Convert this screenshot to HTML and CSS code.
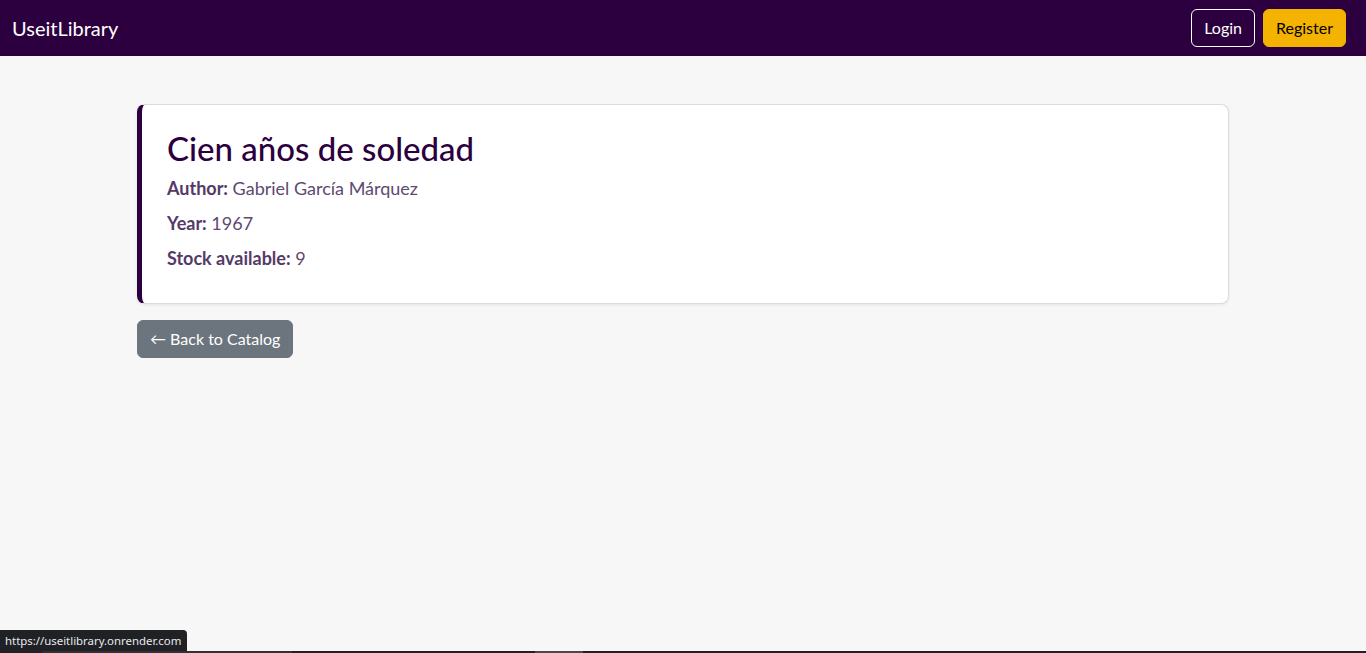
FILE: index.html
```html
<!DOCTYPE html>
<html lang="en">
<head>
<meta charset="utf-8">
<title>UseitLibrary</title>
<link rel="stylesheet" href="styles.css">
</head>
<body>
<nav class="navbar">
  <a class="brand" href="#">UseitLibrary</a>
  <div class="nav-actions">
    <a class="btn btn-outline" href="#">Login</a>
    <a class="btn btn-warning" href="#">Register</a>
  </div>
</nav>
<main class="container">
  <div class="book-card">
    <h2 class="book-title">Cien años de soledad</h2>
    <p class="book-line"><strong>Author:</strong> Gabriel García Márquez</p>
    <p class="book-line"><strong>Year:</strong> 1967</p>
    <p class="book-line"><strong>Stock available:</strong> 9</p>
  </div>
  <a class="btn btn-secondary" href="#">← Back to Catalog</a>
</main>
<div class="status-tip">https://useitlibrary.onrender.com</div>
<div class="screen-edge">
  <span class="seg seg-a"></span>
  <span class="seg seg-b"></span>
</div>
</body>
</html>
```

FILE: styles.css
```css
* { box-sizing: border-box; }
html, body { margin: 0; padding: 0; }
body {
  font-family: Lato, "Noto Sans", sans-serif;
  background: #f7f7f7;
  color: #212529;
  height: 653px;
  overflow: hidden;
}
.navbar {
  height: 56px;
  background: #2c003e;
  display: flex;
  align-items: center;
  justify-content: space-between;
  padding: 0 20px 0 12px;
}
.brand {
  color: #fff;
  text-decoration: none;
  font-size: 20px;
  line-height: 30px;
}
.nav-actions { display: flex; gap: 8px; }
.btn {
  display: inline-block;
  font-family: inherit;
  font-size: 16px;
  line-height: 24px;
  padding: 6px 12px;
  border: 1px solid transparent;
  border-radius: 6px;
  text-decoration: none;
}
.btn-outline { color: #fff; border-color: #fff; }
.btn-warning { background: #f5b301; border-color: #f5b301; color: #000; }
.btn-secondary { background: #6c757d; border-color: #6c757d; color: #fff; }
.container {
  width: 1092px;
  margin: 48px auto 0;
  padding: 0;
}
.book-card {
  background: #fff;
  border: 1px solid #dcdcdc;
  border-left: 5px solid #2c003e;
  border-radius: 8px;
  box-shadow: 0 1px 3px rgba(0,0,0,0.08);
  padding: 24px 24px 16px 25px;
  margin-bottom: 16px;
}
.book-title {
  margin: 0 0 8px;
  font-size: 33px;
  line-height: 38px;
  font-weight: 500;
  color: #2c003e;
}
.book-line {
  margin: 0 0 8px;
  font-size: 18px;
  line-height: 27px;
  color: #5e4a70;
}
.book-line:last-child { margin-bottom: 15px; }
.book-line strong { color: #553a68; font-weight: 700; }
.status-tip {
  position: fixed;
  left: 0;
  bottom: 2px;
  height: 21px;
  padding: 0 6px 0 5px;
  background: #202124;
  color: #e8eaed;
  font-family: "Noto Sans", sans-serif;
  font-size: 11.4px;
  line-height: 21px;
  border-top-right-radius: 4px;
}
.screen-edge {
  position: fixed;
  left: 0; right: 0; bottom: 0;
  height: 2px;
  background: #202124;
}
.seg { position: absolute; top: 0; height: 2px; }
.seg-a { left: 42px; width: 250px; background: #303134; }
.seg-b { left: 535px; width: 48px; background: #4a4a4d; }
```
